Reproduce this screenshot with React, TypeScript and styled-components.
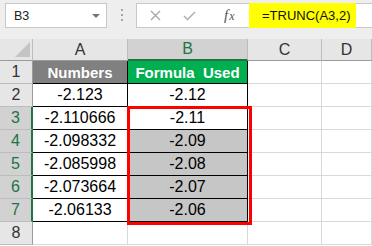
import React from 'react';
import styled, { createGlobalStyle } from 'styled-components';

const GlobalStyle = createGlobalStyle`
  html, body {
    margin: 0;
    padding: 0;
    background: #ffffff;
    overflow: hidden;
  }
  body {
    font-family: "Liberation Sans", Arial, sans-serif;
  }
`;

const Sheet = styled.div`
  width: 372px;
  height: 246px;
  overflow: hidden;
  background: #ffffff;
`;

// top strip with name box and formula bar
const TopBar = styled.div`
  display: flex;
  align-items: flex-start;
  height: 39px;
  padding-top: 3px;
  box-sizing: border-box;
  background: #eeeeee;
`;

const NameBox = styled.div`
  display: flex;
  align-items: center;
  justify-content: space-between;
  margin-left: 5px;
  width: 102px;
  height: 25px;
  box-sizing: border-box;
  padding: 0 6px 0 8px;
  background: #ffffff;
  border: 1px solid #c8c8c8;
  font-size: 12.5px;
  color: #222;
`;

const DropArrow = styled.span`
  width: 0;
  height: 0;
  border-left: 4px solid transparent;
  border-right: 4px solid transparent;
  border-top: 4px solid #777;
`;

const Dots = styled.div`
  display: flex;
  flex-direction: column;
  gap: 3px;
  margin: 6px 13px 0 14px;

  span {
    width: 2px;
    height: 2px;
    background: #a6a6a6;
  }
`;

const FormulaBar = styled.div`
  display: flex;
  flex: 1;
  height: 25px;
`;

const IconBox = styled.div`
  display: flex;
  align-items: center;
  width: 113px;
  box-sizing: border-box;
  padding-left: 13px;
  gap: 22px;
  background: #ffffff;
  border: 1px solid #c8c8c8;
  border-right: none;
`;

const Fx = styled.span`
  font-family: "Liberation Serif", "Times New Roman", serif;
  font-style: italic;
  font-size: 15px;
  color: #555;
  margin-left: 6px;

  sub {
    font-size: 12px;
    vertical-align: baseline;
    margin-left: 1px;
  }
`;

const FormulaText = styled.div`
  display: flex;
  align-items: center;
  width: 107px;
  box-sizing: border-box;
  padding-left: 13px;
  background: #ffff00;
  font-size: 13px;
  color: #111;
`;

const FormulaRest = styled.div`
  flex: 1;
  background: #ffffff;
  border-top: 1px solid #c8c8c8;
  border-bottom: 1px solid #c8c8c8;
`;

// the worksheet grid
const Grid = styled.div`
  position: relative;
  display: grid;
  grid-template-columns: 33px 95px 120px 74px 1fr;
  grid-template-rows: 22px repeat(8, 23px);
`;

const Corner = styled.div`
  position: relative;
  background: #e6e6e6;
  border-right: 1px solid #bdbdbd;
  border-bottom: 1px solid #9b9b9b;
  box-sizing: border-box;

  svg {
    position: absolute;
    right: 2px;
    bottom: 3px;
  }
`;

const ColHead = styled.div<{ $selected?: boolean }>`
  display: flex;
  align-items: center;
  justify-content: center;
  box-sizing: border-box;
  background: ${(p) => (p.$selected ? '#d2d2d2' : '#e6e6e6')};
  color: ${(p) => (p.$selected ? '#217346' : '#333')};
  border-right: 1px solid #bdbdbd;
  border-bottom: ${(p) => (p.$selected ? '2px solid #217346' : '1px solid #9b9b9b')};
  font-size: 16px;
`;

const RowHead = styled.div<{ $selected?: boolean }>`
  display: flex;
  align-items: center;
  justify-content: center;
  box-sizing: border-box;
  background: ${(p) => (p.$selected ? '#d2d2d2' : '#e6e6e6')};
  color: ${(p) => (p.$selected ? '#217346' : '#333')};
  border-bottom: 1px solid #bdbdbd;
  border-right: ${(p) => (p.$selected ? '2px solid #217346' : '1px solid #9b9b9b')};
  font-size: 16px;
`;

const Cell = styled.div<{ $bg?: string; $boxed?: boolean; $head?: boolean }>`
  display: flex;
  align-items: center;
  justify-content: center;
  box-sizing: border-box;
  background: ${(p) => p.$bg || '#ffffff'};
  border-right: 1px solid ${(p) => (p.$boxed ? '#000' : '#d9d9d9')};
  border-bottom: 1px solid ${(p) => (p.$boxed ? '#000' : '#d9d9d9')};
  color: ${(p) => (p.$head ? '#ffffff' : '#000')};
  font-size: ${(p) => (p.$head ? '15px' : '16px')};
  font-weight: ${(p) => (p.$head ? 700 : 400)};
  white-space: pre;
`;

// red annotation box drawn over B3:B7
const Highlight = styled.div`
  position: absolute;
  left: 127px;
  top: 67px;
  width: 125px;
  height: 119px;
  box-sizing: border-box;
  border: 3px solid #ff0000;
  pointer-events: none;
`;

const rows = [
  { a: '-2.123', b: '-2.12' },
  { a: '-2.110666', b: '-2.11' },
  { a: '-2.098332', b: '-2.09' },
  { a: '-2.085998', b: '-2.08' },
  { a: '-2.073664', b: '-2.07' },
  { a: '-2.06133', b: '-2.06' },
];

const App = () => {
  return (
    <Sheet>
      <GlobalStyle />
      <TopBar>
        <NameBox>
          B3
          <DropArrow />
        </NameBox>
        <Dots>
          <span />
          <span />
          <span />
        </Dots>
        <FormulaBar>
          <IconBox>
            <svg width='11' height='11' viewBox='0 0 11 11'>
              <path d='M1 1 L10 10 M10 1 L1 10' stroke='#a8a8a8' strokeWidth='1.4' fill='none' />
            </svg>
            <svg width='13' height='10' viewBox='0 0 13 10'>
              <path d='M1 5 L4.5 8.5 L12 1' stroke='#b4b4b4' strokeWidth='1.6' fill='none' />
            </svg>
            <Fx>
              f<sub>x</sub>
            </Fx>
          </IconBox>
          <FormulaText>=TRUNC(A3,2)</FormulaText>
          <FormulaRest />
        </FormulaBar>
      </TopBar>

      <Grid>
        <Corner>
          <svg width='15' height='15' viewBox='0 0 15 15'>
            <path d='M15 0 L15 15 L0 15 Z' fill='#c4c4c4' />
          </svg>
        </Corner>
        <ColHead>A</ColHead>
        <ColHead $selected>B</ColHead>
        <ColHead>C</ColHead>
        <ColHead>D</ColHead>

        <RowHead>1</RowHead>
        <Cell $bg='#808080' $boxed $head>
          Numbers
        </Cell>
        <Cell $bg='#00b050' $boxed $head>
          {'Formula  Used'}
        </Cell>
        <Cell />
        <Cell />

        {rows.map((r, i) => {
          const rowNum = i + 2;
          const selected = rowNum >= 3;
          return (
            <React.Fragment key={rowNum}>
              <RowHead $selected={selected}>{rowNum}</RowHead>
              <Cell $boxed>{r.a}</Cell>
              <Cell $boxed $bg={rowNum > 3 ? '#c6c6c6' : '#ffffff'}>
                {r.b}
              </Cell>
              <Cell />
              <Cell />
            </React.Fragment>
          );
        })}

        <RowHead>8</RowHead>
        <Cell />
        <Cell />
        <Cell />
        <Cell />

        <Highlight />
      </Grid>
    </Sheet>
  );
};

export default App;
